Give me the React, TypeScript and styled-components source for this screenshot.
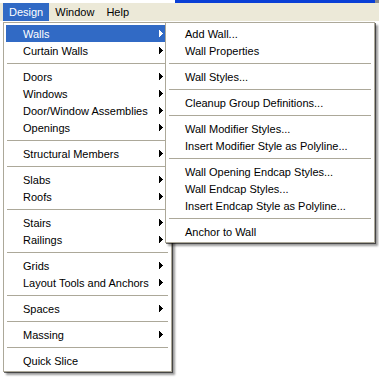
import React from "react";
import styled, { createGlobalStyle } from "styled-components";

const GlobalStyle = createGlobalStyle`
  html, body {
    margin: 0;
    padding: 0;
    background: #fff;
  }
  body {
    font-family: "Liberation Sans", Arial, sans-serif;
    font-size: 11px;
    color: #000;
  }
`;

const Screen = styled.div`
  position: relative;
  width: 379px;
  height: 377px;
  overflow: hidden;
  background: #fff;
  display: flex;
  flex-direction: column;
`;

const TitleEdge = styled.div`
  height: 3px;
  display: flex;
`;

const EdgePart = styled.div<{ $color: string; $width?: number }>`
  background: ${(p) => p.$color};
  width: ${(p) => (p.$width ? `${p.$width}px` : "auto")};
  flex: ${(p) => (p.$width ? "none" : "1")};
`;

const MenuBar = styled.div`
  height: 18px;
  background: #ece9d8;
  display: flex;
  align-items: stretch;
  padding-left: 3px;
`;

const BarItem = styled.div<{ $active?: boolean }>`
  padding: 0 6px;
  line-height: 18px;
  background: ${(p) => (p.$active ? "#316ac5" : "transparent")};
  color: ${(p) => (p.$active ? "#fff" : "#000")};
`;

const Menu = styled.div<{ $left: number; $top: number; $width: number }>`
  position: absolute;
  left: ${(p) => p.$left}px;
  top: ${(p) => p.$top}px;
  width: ${(p) => p.$width}px;
  box-sizing: border-box;
  background: #fff;
  border: 1px solid #aca899;
  padding: 2px;
  box-shadow: 1px 1px 0 rgba(0, 0, 0, 0.55), 3px 3px 2px rgba(0, 0, 0, 0.4);
  display: flex;
  flex-direction: column;
`;

const Item = styled.div<{ $active?: boolean }>`
  height: 17px;
  display: flex;
  align-items: center;
  justify-content: space-between;
  padding: 0 6px 0 17px;
  background: ${(p) => (p.$active ? "#316ac5" : "transparent")};
  color: ${(p) => (p.$active ? "#fff" : "#000")};
  white-space: nowrap;
`;

const Separator = styled.div`
  height: 9px;
  display: flex;
  align-items: center;
  padding: 0 1px;

  &::after {
    content: "";
    flex: 1;
    height: 1px;
    background: #aca899;
  }
`;

const Arrow = ({ color }: { color: string }) => (
  <svg width="4" height="7" viewBox="0 0 4 7" shapeRendering="crispEdges">
    <polygon points="0,0 4,3.5 0,7" fill={color} />
  </svg>
);

type Entry = { label: string; sub?: boolean; active?: boolean } | "sep";

const designItems: Entry[] = [
  { label: "Walls", sub: true, active: true },
  { label: "Curtain Walls", sub: true },
  "sep",
  { label: "Doors", sub: true },
  { label: "Windows", sub: true },
  { label: "Door/Window Assemblies", sub: true },
  { label: "Openings", sub: true },
  "sep",
  { label: "Structural Members", sub: true },
  "sep",
  { label: "Slabs", sub: true },
  { label: "Roofs", sub: true },
  "sep",
  { label: "Stairs", sub: true },
  { label: "Railings", sub: true },
  "sep",
  { label: "Grids", sub: true },
  { label: "Layout Tools and Anchors", sub: true },
  "sep",
  { label: "Spaces", sub: true },
  "sep",
  { label: "Massing", sub: true },
  "sep",
  { label: "Quick Slice" },
];

const wallItems: Entry[] = [
  { label: "Add Wall..." },
  { label: "Wall Properties" },
  "sep",
  { label: "Wall Styles..." },
  "sep",
  { label: "Cleanup Group Definitions..." },
  "sep",
  { label: "Wall Modifier Styles..." },
  { label: "Insert Modifier Style as Polyline..." },
  "sep",
  { label: "Wall Opening Endcap Styles..." },
  { label: "Wall Endcap Styles..." },
  { label: "Insert Endcap Style as Polyline..." },
  "sep",
  { label: "Anchor to Wall" },
];

const renderEntries = (entries: Entry[]) =>
  entries.map((e, i) =>
    e === "sep" ? (
      <Separator key={i} />
    ) : (
      <Item key={i} $active={e.active}>
        <span>{e.label}</span>
        {e.sub && <Arrow color={e.active ? "#fff" : "#000"} />}
      </Item>
    )
  );

const App: React.FC = () => {
  return (
    <>
      <GlobalStyle />
      <Screen>
        <TitleEdge>
          <EdgePart $color="#fff" $width={175} />
          <EdgePart $color="#0a3fd6" />
          <EdgePart $color="#8c8c8c" $width={4} />
        </TitleEdge>
        <MenuBar>
          <BarItem $active>Design</BarItem>
          <BarItem>Window</BarItem>
          <BarItem>Help</BarItem>
        </MenuBar>
        <Menu $left={3} $top={22} $width={169}>
          {renderEntries(designItems)}
        </Menu>
        <Menu $left={165} $top={22} $width={210}>
          {renderEntries(wallItems)}
        </Menu>
      </Screen>
    </>
  );
};

export default App;
